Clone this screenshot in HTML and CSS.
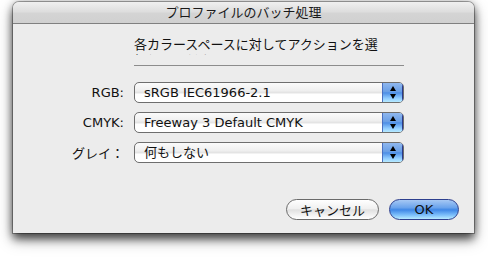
FILE: index.html
```html
<!DOCTYPE html>
<html lang="ja">
<head>
<meta charset="utf-8">
<link rel="stylesheet" href="styles.css">
</head>
<body>
<div class="window">
  <div class="titlebar">プロファイルのバッチ処理</div>
  <div class="content">
    <div class="msg">各カラースペースに対してアクションを選択してください。</div>
    <div class="sep"></div>
    <div class="rows">
      <div class="label">RGB:</div>
      <div class="popup"><span class="value">sRGB IEC61966-2.1</span><span class="arrows"><i class="up"></i><i class="down"></i></span></div>
      <div class="label">CMYK:</div>
      <div class="popup"><span class="value">Freeway 3 Default CMYK</span><span class="arrows"><i class="up"></i><i class="down"></i></span></div>
      <div class="label">グレイ：</div>
      <div class="popup"><span class="value">何もしない</span><span class="arrows"><i class="up"></i><i class="down"></i></span></div>
    </div>
    <div class="buttons">
      <div class="btn cancel">キャンセル</div>
      <div class="btn ok">OK</div>
    </div>
  </div>
</div>
</body>
</html>
```
FILE: styles.css
```css
html, body {
  margin: 0;
  padding: 0;
  background: #ffffff;
}
html { height: 100%; }
body {
  box-sizing: border-box;
  min-height: 100%;
  padding: 2px 0 0 13px;
  font-family: "DejaVu Sans", "Noto Sans CJK JP", sans-serif;
  color: #111;
}
.window {
  width: 461px;
  height: 231px;
  background: #ececec;
  border-radius: 6px 6px 0 0;
  box-shadow: 0 0 0 1px rgba(0,0,0,0.3), 0 6px 8px rgba(0,0,0,0.55), 0 6px 16px rgba(0,0,0,0.35), 0 0 8px rgba(0,0,0,0.25);
  overflow: hidden;
  box-sizing: border-box;
}
.titlebar {
  height: 21px;
  border-bottom: 1px solid #808080;
  background: linear-gradient(#f0f0f0, #dedede 45%, #d4d4d4 55%, #d0d0d0);
  text-align: center;
  font-family: "Noto Sans CJK JP", sans-serif;
  font-size: 13px;
  line-height: 20px;
  color: #1a1a1a;
}
.content {
  display: flex;
  flex-direction: column;
}
.msg {
  margin: 12px 0 0 121px;
  width: 252px;
  height: 19px;
  overflow: hidden;
  font-family: "Noto Sans CJK JP", sans-serif;
  font-size: 13px;
  line-height: 16px;
}
.sep {
  margin: 10px 0 0 121px;
  width: 270px;
  height: 1px;
  background: #8c8c8c;
}
.rows {
  margin-top: 16px;
  display: grid;
  grid-template-columns: 111px 270px;
  column-gap: 10px;
  row-gap: 9px;
  align-items: center;
}
.label {
  text-align: right;
  font-family: "DejaVu Sans", "Noto Sans CJK JP", sans-serif;
  font-size: 13px;
}
.popup {
  height: 21px;
  box-sizing: border-box;
  border: 1px solid #6e6e6e;
  border-radius: 5px;
  display: flex;
  overflow: hidden;
  background: linear-gradient(#fbfbfb, #efefef 40%, #e4e4e4 50%, #ffffff 60%, #ffffff);
}
.value {
  flex: 1;
  padding-left: 9px;
  font-size: 13px;
  line-height: 19px;
  white-space: nowrap;
  font-family: "DejaVu Sans", "Noto Sans CJK JP", sans-serif;
}
.arrows {
  width: 20px;
  display: flex;
  flex-direction: column;
  align-items: center;
  justify-content: center;
  gap: 3px;
  border-left: 1px solid #4a6fc0;
  background: linear-gradient(#8fb7ee, #6a9fe6 45%, #4d8ee6 52%, #8fcbff 80%, #b6eaff);
  box-shadow: inset -1px 0 0 #2b3a8c;
}
.arrows i {
  display: block;
  width: 0;
  height: 0;
  border-left: 3px solid transparent;
  border-right: 3px solid transparent;
}
.arrows .up { border-bottom: 5px solid #000; }
.arrows .down { border-top: 5px solid #000; }
.buttons {
  margin-top: 36px;
  display: flex;
  justify-content: flex-end;
  gap: 10px;
  padding-right: 15px;
}
.btn {
  height: 21px;
  box-sizing: border-box;
  border-radius: 11px;
  text-align: center;
  font-size: 13px;
  line-height: 19px;
  font-family: "DejaVu Sans", "Noto Sans CJK JP", sans-serif;
}
.cancel {
  width: 93px;
  border: 1px solid #6a6a6a;
  background: linear-gradient(#ffffff, #f0f0f0 45%, #e0e0e0 52%, #f6f6f6 85%, #ffffff);
  font-family: "Noto Sans CJK JP", sans-serif;
}
.ok {
  width: 70px;
  border: 1px solid #2d3f8e;
  background: linear-gradient(#a6c8f4, #6aa3ec 40%, #3f87e6 52%, #7fc1fb 80%, #b8eaff);
}
```
